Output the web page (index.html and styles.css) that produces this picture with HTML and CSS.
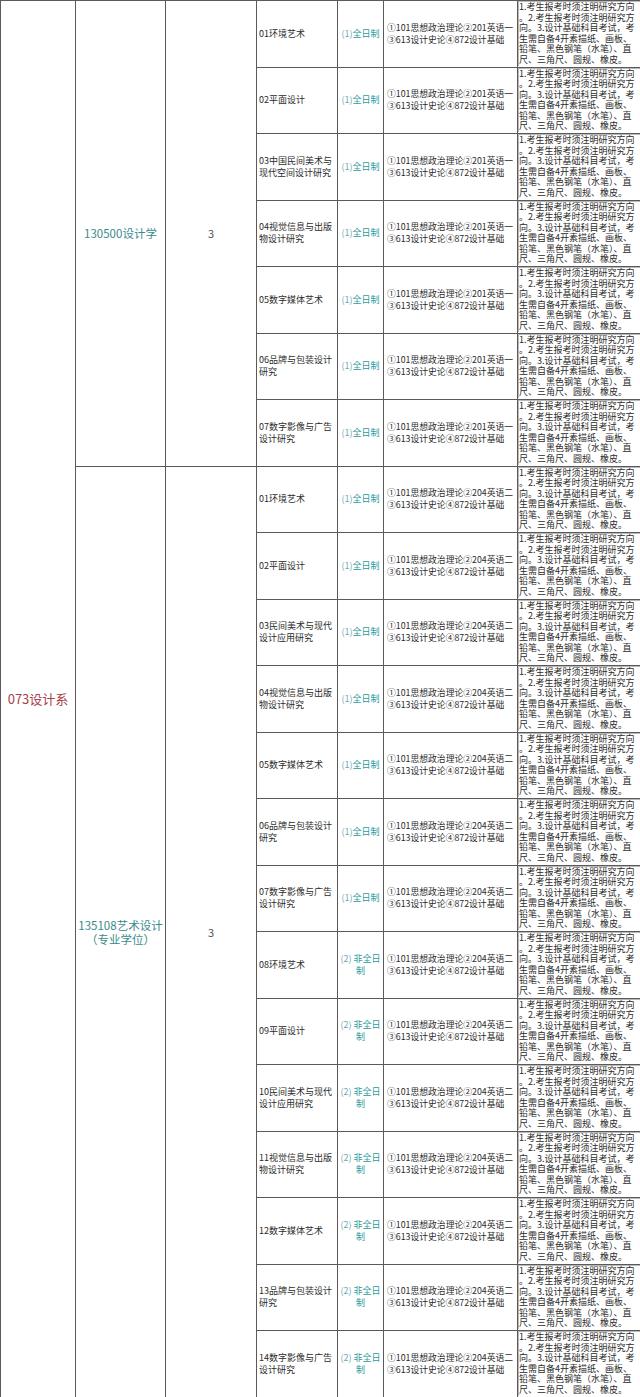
FILE: index.html
```html
<!DOCTYPE html>
<html lang="zh-CN">
<head>
<meta charset="utf-8">
<title>073设计系</title>
<link rel="stylesheet" href="styles.css">
</head>
<body>
<table class="grid">
<colgroup>
<col class="c-dept"><col class="c-major"><col class="c-num"><col class="c-dir"><col class="c-mode"><col class="c-exam"><col class="c-note">
</colgroup>
<tbody>
<tr>
<td class="dept" rowspan="21">073设计系</td>
<td class="major" rowspan="7">130500设计学</td>
<td class="num" rowspan="7">3</td>
<td class="dir">01环境艺术</td>
<td class="mode"><span class="paren">(1)</span>全日制</td>
<td class="exam">①101思想政治理论②201英语一<br>③613设计史论④872设计基础</td>
<td class="note"><div class="note-box">1.考生报考时须注明研究方向<br>。2.考生报考时须注明研究方<br>向。3.设计基础科目考试，考<br>生需自备4开素描纸、画板、<br>铅笔、黑色钢笔（水笔）、直<br>尺、三角尺、圆规、橡皮。</div></td>
</tr>
<tr>
<td class="dir">02平面设计</td>
<td class="mode"><span class="paren">(1)</span>全日制</td>
<td class="exam">①101思想政治理论②201英语一<br>③613设计史论④872设计基础</td>
<td class="note"><div class="note-box">1.考生报考时须注明研究方向<br>。2.考生报考时须注明研究方<br>向。3.设计基础科目考试，考<br>生需自备4开素描纸、画板、<br>铅笔、黑色钢笔（水笔）、直<br>尺、三角尺、圆规、橡皮。</div></td>
</tr>
<tr>
<td class="dir">03中国民间美术与<br>现代空间设计研究</td>
<td class="mode"><span class="paren">(1)</span>全日制</td>
<td class="exam">①101思想政治理论②201英语一<br>③613设计史论④872设计基础</td>
<td class="note"><div class="note-box">1.考生报考时须注明研究方向<br>。2.考生报考时须注明研究方<br>向。3.设计基础科目考试，考<br>生需自备4开素描纸、画板、<br>铅笔、黑色钢笔（水笔）、直<br>尺、三角尺、圆规、橡皮。</div></td>
</tr>
<tr>
<td class="dir">04视觉信息与出版<br>物设计研究</td>
<td class="mode"><span class="paren">(1)</span>全日制</td>
<td class="exam">①101思想政治理论②201英语一<br>③613设计史论④872设计基础</td>
<td class="note"><div class="note-box">1.考生报考时须注明研究方向<br>。2.考生报考时须注明研究方<br>向。3.设计基础科目考试，考<br>生需自备4开素描纸、画板、<br>铅笔、黑色钢笔（水笔）、直<br>尺、三角尺、圆规、橡皮。</div></td>
</tr>
<tr>
<td class="dir">05数字媒体艺术</td>
<td class="mode"><span class="paren">(1)</span>全日制</td>
<td class="exam">①101思想政治理论②201英语一<br>③613设计史论④872设计基础</td>
<td class="note"><div class="note-box">1.考生报考时须注明研究方向<br>。2.考生报考时须注明研究方<br>向。3.设计基础科目考试，考<br>生需自备4开素描纸、画板、<br>铅笔、黑色钢笔（水笔）、直<br>尺、三角尺、圆规、橡皮。</div></td>
</tr>
<tr>
<td class="dir">06品牌与包装设计<br>研究</td>
<td class="mode"><span class="paren">(1)</span>全日制</td>
<td class="exam">①101思想政治理论②201英语一<br>③613设计史论④872设计基础</td>
<td class="note"><div class="note-box">1.考生报考时须注明研究方向<br>。2.考生报考时须注明研究方<br>向。3.设计基础科目考试，考<br>生需自备4开素描纸、画板、<br>铅笔、黑色钢笔（水笔）、直<br>尺、三角尺、圆规、橡皮。</div></td>
</tr>
<tr>
<td class="dir">07数字影像与广告<br>设计研究</td>
<td class="mode"><span class="paren">(1)</span>全日制</td>
<td class="exam">①101思想政治理论②201英语一<br>③613设计史论④872设计基础</td>
<td class="note"><div class="note-box">1.考生报考时须注明研究方向<br>。2.考生报考时须注明研究方<br>向。3.设计基础科目考试，考<br>生需自备4开素描纸、画板、<br>铅笔、黑色钢笔（水笔）、直<br>尺、三角尺、圆规、橡皮。</div></td>
</tr>
<tr>
<td class="major" rowspan="14">135108艺术设计<br>（专业学位）</td>
<td class="num" rowspan="14">3</td>
<td class="dir">01环境艺术</td>
<td class="mode"><span class="paren">(1)</span>全日制</td>
<td class="exam">①101思想政治理论②204英语二<br>③613设计史论④872设计基础</td>
<td class="note"><div class="note-box">1.考生报考时须注明研究方向<br>。2.考生报考时须注明研究方<br>向。3.设计基础科目考试，考<br>生需自备4开素描纸、画板、<br>铅笔、黑色钢笔（水笔）、直<br>尺、三角尺、圆规、橡皮。</div></td>
</tr>
<tr>
<td class="dir">02平面设计</td>
<td class="mode"><span class="paren">(1)</span>全日制</td>
<td class="exam">①101思想政治理论②204英语二<br>③613设计史论④872设计基础</td>
<td class="note"><div class="note-box">1.考生报考时须注明研究方向<br>。2.考生报考时须注明研究方<br>向。3.设计基础科目考试，考<br>生需自备4开素描纸、画板、<br>铅笔、黑色钢笔（水笔）、直<br>尺、三角尺、圆规、橡皮。</div></td>
</tr>
<tr>
<td class="dir">03民间美术与现代<br>设计应用研究</td>
<td class="mode"><span class="paren">(1)</span>全日制</td>
<td class="exam">①101思想政治理论②204英语二<br>③613设计史论④872设计基础</td>
<td class="note"><div class="note-box">1.考生报考时须注明研究方向<br>。2.考生报考时须注明研究方<br>向。3.设计基础科目考试，考<br>生需自备4开素描纸、画板、<br>铅笔、黑色钢笔（水笔）、直<br>尺、三角尺、圆规、橡皮。</div></td>
</tr>
<tr>
<td class="dir">04视觉信息与出版<br>物设计研究</td>
<td class="mode"><span class="paren">(1)</span>全日制</td>
<td class="exam">①101思想政治理论②204英语二<br>③613设计史论④872设计基础</td>
<td class="note"><div class="note-box">1.考生报考时须注明研究方向<br>。2.考生报考时须注明研究方<br>向。3.设计基础科目考试，考<br>生需自备4开素描纸、画板、<br>铅笔、黑色钢笔（水笔）、直<br>尺、三角尺、圆规、橡皮。</div></td>
</tr>
<tr>
<td class="dir">05数字媒体艺术</td>
<td class="mode"><span class="paren">(1)</span>全日制</td>
<td class="exam">①101思想政治理论②204英语二<br>③613设计史论④872设计基础</td>
<td class="note"><div class="note-box">1.考生报考时须注明研究方向<br>。2.考生报考时须注明研究方<br>向。3.设计基础科目考试，考<br>生需自备4开素描纸、画板、<br>铅笔、黑色钢笔（水笔）、直<br>尺、三角尺、圆规、橡皮。</div></td>
</tr>
<tr>
<td class="dir">06品牌与包装设计<br>研究</td>
<td class="mode"><span class="paren">(1)</span>全日制</td>
<td class="exam">①101思想政治理论②204英语二<br>③613设计史论④872设计基础</td>
<td class="note"><div class="note-box">1.考生报考时须注明研究方向<br>。2.考生报考时须注明研究方<br>向。3.设计基础科目考试，考<br>生需自备4开素描纸、画板、<br>铅笔、黑色钢笔（水笔）、直<br>尺、三角尺、圆规、橡皮。</div></td>
</tr>
<tr>
<td class="dir">07数字影像与广告<br>设计研究</td>
<td class="mode"><span class="paren">(1)</span>全日制</td>
<td class="exam">①101思想政治理论②204英语二<br>③613设计史论④872设计基础</td>
<td class="note"><div class="note-box">1.考生报考时须注明研究方向<br>。2.考生报考时须注明研究方<br>向。3.设计基础科目考试，考<br>生需自备4开素描纸、画板、<br>铅笔、黑色钢笔（水笔）、直<br>尺、三角尺、圆规、橡皮。</div></td>
</tr>
<tr>
<td class="dir">08环境艺术</td>
<td class="mode"><span class="paren">(2)</span> 非全日<br>制</td>
<td class="exam">①101思想政治理论②204英语二<br>③613设计史论④872设计基础</td>
<td class="note"><div class="note-box">1.考生报考时须注明研究方向<br>。2.考生报考时须注明研究方<br>向。3.设计基础科目考试，考<br>生需自备4开素描纸、画板、<br>铅笔、黑色钢笔（水笔）、直<br>尺、三角尺、圆规、橡皮。</div></td>
</tr>
<tr>
<td class="dir">09平面设计</td>
<td class="mode"><span class="paren">(2)</span> 非全日<br>制</td>
<td class="exam">①101思想政治理论②204英语二<br>③613设计史论④872设计基础</td>
<td class="note"><div class="note-box">1.考生报考时须注明研究方向<br>。2.考生报考时须注明研究方<br>向。3.设计基础科目考试，考<br>生需自备4开素描纸、画板、<br>铅笔、黑色钢笔（水笔）、直<br>尺、三角尺、圆规、橡皮。</div></td>
</tr>
<tr>
<td class="dir">10民间美术与现代<br>设计应用研究</td>
<td class="mode"><span class="paren">(2)</span> 非全日<br>制</td>
<td class="exam">①101思想政治理论②204英语二<br>③613设计史论④872设计基础</td>
<td class="note"><div class="note-box">1.考生报考时须注明研究方向<br>。2.考生报考时须注明研究方<br>向。3.设计基础科目考试，考<br>生需自备4开素描纸、画板、<br>铅笔、黑色钢笔（水笔）、直<br>尺、三角尺、圆规、橡皮。</div></td>
</tr>
<tr>
<td class="dir">11视觉信息与出版<br>物设计研究</td>
<td class="mode"><span class="paren">(2)</span> 非全日<br>制</td>
<td class="exam">①101思想政治理论②204英语二<br>③613设计史论④872设计基础</td>
<td class="note"><div class="note-box">1.考生报考时须注明研究方向<br>。2.考生报考时须注明研究方<br>向。3.设计基础科目考试，考<br>生需自备4开素描纸、画板、<br>铅笔、黑色钢笔（水笔）、直<br>尺、三角尺、圆规、橡皮。</div></td>
</tr>
<tr>
<td class="dir">12数字媒体艺术</td>
<td class="mode"><span class="paren">(2)</span> 非全日<br>制</td>
<td class="exam">①101思想政治理论②204英语二<br>③613设计史论④872设计基础</td>
<td class="note"><div class="note-box">1.考生报考时须注明研究方向<br>。2.考生报考时须注明研究方<br>向。3.设计基础科目考试，考<br>生需自备4开素描纸、画板、<br>铅笔、黑色钢笔（水笔）、直<br>尺、三角尺、圆规、橡皮。</div></td>
</tr>
<tr>
<td class="dir">13品牌与包装设计<br>研究</td>
<td class="mode"><span class="paren">(2)</span> 非全日<br>制</td>
<td class="exam">①101思想政治理论②204英语二<br>③613设计史论④872设计基础</td>
<td class="note"><div class="note-box">1.考生报考时须注明研究方向<br>。2.考生报考时须注明研究方<br>向。3.设计基础科目考试，考<br>生需自备4开素描纸、画板、<br>铅笔、黑色钢笔（水笔）、直<br>尺、三角尺、圆规、橡皮。</div></td>
</tr>
<tr>
<td class="dir">14数字影像与广告<br>设计研究</td>
<td class="mode"><span class="paren">(2)</span> 非全日<br>制</td>
<td class="exam">①101思想政治理论②204英语二<br>③613设计史论④872设计基础</td>
<td class="note"><div class="note-box">1.考生报考时须注明研究方向<br>。2.考生报考时须注明研究方<br>向。3.设计基础科目考试，考<br>生需自备4开素描纸、画板、<br>铅笔、黑色钢笔（水笔）、直<br>尺、三角尺、圆规、橡皮。</div></td>
</tr>
</tbody>
</table>
</body>
</html>
```
FILE: styles.css
```css
html, body {
  margin: 0;
  padding: 0;
  background: #ffffff;
}

body {
  font-family: "Noto Sans CJK SC", "Noto Sans", sans-serif;
  color: #2b2b2b;
}

.grid {
  width: 640px;
  border-collapse: collapse;
  table-layout: fixed;
}

.c-dept { width: 75px; }
.c-major { width: 90px; }
.c-num { width: 91px; }
.c-dir { width: 81px; }
.c-mode { width: 46px; }
.c-exam { width: 134px; }
.c-note { width: 123px; }

.grid tr {
  height: 66.5px;
}

.grid td {
  border: 1px solid #5a5a5a;
  padding: 0;
  vertical-align: middle;
}

.dept {
  text-align: center;
  font-size: 13px;
  color: #a8404a;
}

.major {
  text-align: center;
  font-size: 11.5px;
  line-height: 14px;
  color: #3a8a8c;
}

.num {
  text-align: center;
  font-size: 11px;
  color: #555555;
}

.dir {
  font-size: 9px;
  line-height: 12px;
  padding-left: 2px !important;
  color: #2b2b2b;
}

.mode {
  text-align: center;
  font-size: 9px;
  line-height: 12px;
  color: #2b9a9c;
}

.paren {
  color: #6fa9b0;
}

.exam {
  font-size: 8.8px;
  line-height: 12px;
  padding-left: 3px !important;
  white-space: nowrap;
  color: #2b2b2b;
}

.note {
  vertical-align: top !important;
}

.note-box {
  font-size: 9px;
  line-height: 10.6px;
  white-space: nowrap;
  padding: 1px 0 0 1px;
  box-shadow: inset 1px 1px 0 #b8b8b8;
  color: #2b2b2b;
}
```
